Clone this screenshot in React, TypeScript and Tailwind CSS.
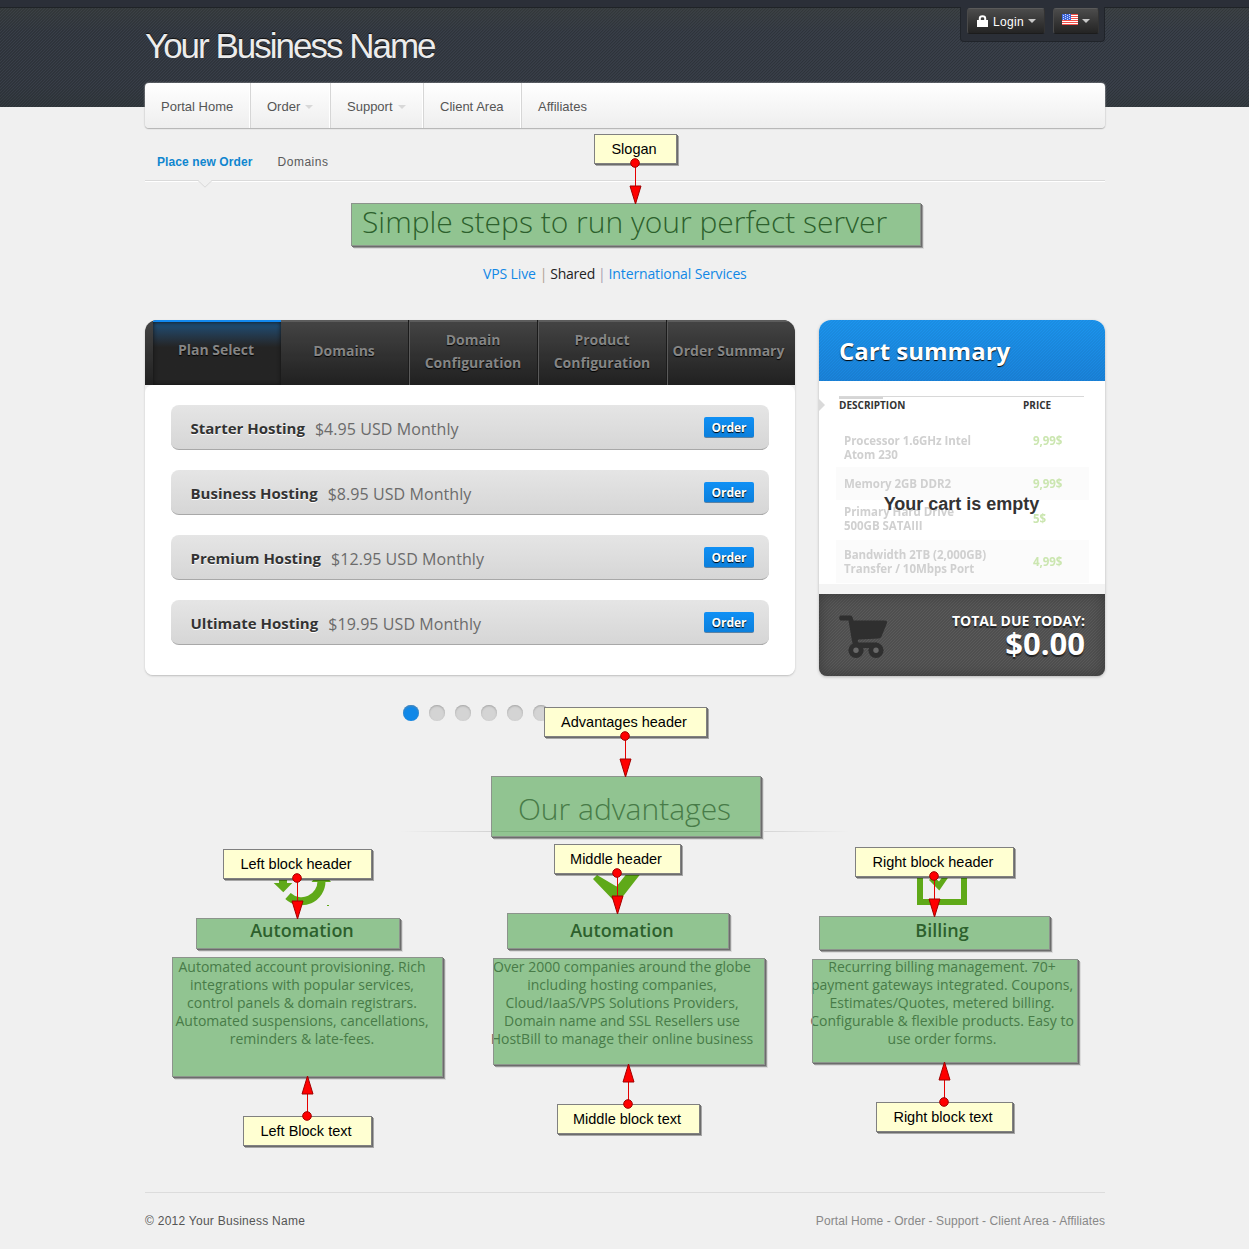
import React from "react";

const green = "#5fa918";

type Callout = {
  label: string;
  x: number;
  y: number;
  w: number;
  dotX: number;
  dotY: number;
  tipY: number;
};

const callouts: Callout[] = [
  { label: "Slogan", x: 594, y: 134, w: 83, dotX: 635, dotY: 163, tipY: 204 },
  { label: "Advantages header", x: 544, y: 707, w: 163, dotX: 625, dotY: 736, tipY: 777 },
  { label: "Left block header", x: 223, y: 849, w: 149, dotX: 297, dotY: 878, tipY: 919 },
  { label: "Middle header", x: 554, y: 844, w: 127, dotX: 617, dotY: 873, tipY: 914 },
  { label: "Right block header", x: 855, y: 847, w: 159, dotX: 934, dotY: 876, tipY: 917 },
  { label: "Left Block text", x: 243, y: 1116, w: 129, dotX: 307, dotY: 1116, tipY: 1076 },
  { label: "Middle block text", x: 557, y: 1104, w: 143, dotX: 628, dotY: 1104, tipY: 1064 },
  { label: "Right block text", x: 876, y: 1102, w: 137, dotX: 944, dotY: 1102, tipY: 1062 },
];

const highlights = [
  { x: 351, y: 203, w: 570, h: 43 },
  { x: 491, y: 776, w: 270, h: 61 },
  { x: 196, y: 918, w: 204, h: 31 },
  { x: 507, y: 913, w: 222, h: 36 },
  { x: 819, y: 916, w: 231, h: 34 },
  { x: 172, y: 957, w: 271, h: 120 },
  { x: 493, y: 958, w: 272, h: 107 },
  { x: 812, y: 959, w: 266, h: 104 },
];

function Annotations() {
  return (
    <div className="pointer-events-none absolute inset-0">
      {highlights.map((h, i) => (
        <div
          key={i}
          className="absolute border border-[#8c948c] bg-[#269326]/47 shadow-[1px_1px_0_#6c6c6c,2px_2px_0_#9a9a9a,3px_3px_0_#dcdcdc]"
          style={{ left: h.x, top: h.y, width: h.w, height: h.h }}
        />
      ))}
      {callouts.map((c) => (
        <div
          key={c.label}
          className="absolute flex h-[30px] items-center justify-center border border-[#808080] bg-[#ffffd2] pr-[3px] text-[14.5px] leading-none whitespace-nowrap text-black shadow-[1px_1px_0_#6c6c6c,2px_2px_0_rgba(0,0,0,0.3)]"
          style={{ left: c.x, top: c.y, width: c.w }}
        >
          {c.label}
        </div>
      ))}
      <svg className="absolute inset-0" width="1249" height="1249">
        {callouts.map((c) => {
          const base = c.tipY > c.dotY ? c.tipY - 18 : c.tipY + 18;
          const x = c.dotX + 0.5;
          return (
            <g key={c.label} fill="#ff0000" stroke="#a00000">
              <line x1={x} x2={x} y1={c.dotY} y2={base} stroke="#e60000" />
              <path d={`M${x - 5.5} ${base}H${x + 5.5}L${x} ${c.tipY}Z`} />
              <circle cx={c.dotX} cy={c.dotY} r="4.3" />
            </g>
          );
        })}
      </svg>
    </div>
  );
}

function Caret({ className }: { className: string }) {
  return (
    <svg className={className} width="8" height="4" viewBox="0 0 8 4">
      <path d="M0 0H8L4 4Z" fill="currentColor" />
    </svg>
  );
}

function Flag() {
  return (
    <svg width="16" height="11" viewBox="0 0 16 11" shapeRendering="crispEdges">
      <rect width="16" height="11" fill="#fff" />
      {[0, 2, 4, 6, 8, 10].map((y) => (
        <rect key={y} y={y} width="16" height="1" fill="#f2504a" />
      ))}
      <rect width="9" height="6" fill="#3f67d8" />
      {[1, 3, 5].map((y) =>
        [1, 3, 5, 7].map((x) => <rect key={`${x}${y}`} x={x} y={y - (x % 4 === 3 ? 1 : 0)} width="1" height="1" fill="#c9d6ff" />),
      )}
    </svg>
  );
}

function Header() {
  return (
    <header className="h-[107px] bg-[#343a42] bg-[linear-gradient(180deg,rgba(64,68,60,0.45),rgba(52,58,70,0.25)_30%,rgba(52,58,70,0.25)_80%,rgba(46,54,56,0.45)),repeating-linear-gradient(135deg,#2c3137_0px,#2c3137_0.7px,#3a4049_1.2px,#3a4049_2.12px)]">
      <div className="h-2 border-b border-[#1f2327] bg-[#2b2f38]" />
      <div className="ml-[145px] flex w-[960px] justify-between">
        <h1 className="mt-[17px] text-[35px] leading-[42px] tracking-[-2px] text-[#ececec] [text-shadow:0_-1px_1px_#111]">
          Your Business Name
        </h1>
        <div className="-mt-px flex h-[35px] w-[145px] gap-2 rounded-b-[4px] border border-t-0 border-[#20242a] bg-[#2b2f37] pt-px pl-[6px]">
          <button className="flex h-[26px] w-[78px] items-center rounded-[3px] border border-t-[#5a5a5a] border-r-[#333] border-b-[#1c1c1c] border-l-[#4a4a4a] bg-linear-to-b from-[#4c4c4c] to-[#242424] pl-[9px] text-[12px] text-white">
            <svg width="11" height="12" viewBox="0 0 11 12">
              <path d="M0 5H11V12H0Z" fill="#fff" />
              <path d="M2.8 5.5V3.3C2.8 .6 8.2 .6 8.2 3.3V5.5" fill="none" stroke="#fff" strokeWidth="2" />
            </svg>
            <span className="ml-[5px] pt-px tracking-[0.3px]">Login</span>
            <Caret className="ml-1 text-[#c8c8c8]" />
          </button>
          <button className="flex h-[26px] w-[46px] items-center rounded-[3px] border border-t-[#5a5a5a] border-r-[#333] border-b-[#1c1c1c] border-l-[#4a4a4a] bg-linear-to-b from-[#4c4c4c] to-[#242424] pl-2 text-white">
            <span className="-mt-[3px]">
              <Flag />
            </span>
            <Caret className="ml-1 text-[#c8c8c8]" />
          </button>
        </div>
      </div>
    </header>
  );
}

function Nav() {
  const item = "flex items-center border-r border-[#d6d6d6] pl-4 pt-[2px] shadow-[inset_-1px_0_0_#fff]";
  return (
    <nav className="relative -mt-6 ml-[145px] flex h-[45px] w-[960px] rounded-[4px] bg-linear-to-b from-white to-[#eeeeee] text-[13px] text-[#555] shadow-[0_1px_1px_#b4b4b4,0_0_2px_#bbb]">
      <a className={`${item} w-[106px]`}>Portal Home</a>
      <a className={`${item} w-[80px]`}>
        Order
        <Caret className="ml-[5px] text-[#d8d8d8]" />
      </a>
      <a className={`${item} w-[93px]`}>
        Support
        <Caret className="ml-[5px] text-[#d8d8d8]" />
      </a>
      <a className={`${item} w-[98px]`}>Client Area</a>
      <a className="flex items-center pt-[2px] pl-4">Affiliates</a>
    </nav>
  );
}

function SubNav() {
  return (
    <div className="ml-[145px] h-[75px] w-[960px]">
      <div className="flex h-[53px] gap-[25px] border-b border-[#dadada] pt-[26px] pl-3 text-[12px] leading-[16px] shadow-[0_1px_0_#fff]">
        <a className="font-bold tracking-[0.1px] text-[#0f86cf]">Place new Order</a>
        <a className="tracking-[0.5px] text-[#5a5a5a]">Domains</a>
      </div>
      <svg className="relative -top-px ml-[53px]" width="14" height="8" viewBox="0 0 14 8">
        <path d="M0 0L7 7L14 0Z" fill="#f0f0f0" />
        <path d="M0 .5L7 7.2L14 .5" fill="none" stroke="#d8d8d8" />
      </svg>
    </div>
  );
}

const plans = [
  ["Starter Hosting", "$4.95 USD Monthly"],
  ["Business Hosting", "$8.95 USD Monthly"],
  ["Premium Hosting", "$12.95 USD Monthly"],
  ["Ultimate Hosting", "$19.95 USD Monthly"],
];

function PlanPanel() {
  const tab =
    "flex items-center justify-center border-l border-[#5a5a5a] pr-[2px] pb-1 text-center shadow-[inset_0_2px_0_#5c5c5c,-1px_0_0_#1b1b1b]";
  return (
    <section className="h-[355px] w-[650px] rounded-b-[8px] rounded-t-[12px] bg-[#f0f0f0] shadow-[0_1px_2px_#bdbdbd]">
      <div className="flex h-[65px] overflow-hidden rounded-t-[12px] bg-[radial-gradient(rgba(0,0,0,0.1)_0.8px,transparent_0.9px),linear-gradient(180deg,#4c4c4c,#242424)] bg-[size:2px_2px,100%_100%] pl-2 text-[14px] leading-[23px] font-bold text-[#858585] [text-shadow:0_1px_1px_#000]">
        <div className="flex w-[128px] items-center justify-center border-t-2 border-[#1289f0] bg-linear-to-b from-[#1d4a70] from-5% via-[#242424] via-40% to-[#242424] pr-[2px] pb-[8px] shadow-[inset_0_0_4px_#111]">
          Plan Select
        </div>
        <div className="flex w-[128px] items-center justify-center pr-[2px] pb-1 shadow-[inset_0_2px_0_#5c5c5c]">Domains</div>
        <div className={`${tab} w-[129px]`}>
          Domain
          <br />
          Configuration
        </div>
        <div className={`${tab} w-[129px]`}>
          Product
          <br />
          Configuration
        </div>
        <div className="flex w-[128px] items-center justify-center border-l border-[#5a5a5a] pr-[6px] pb-1 whitespace-nowrap shadow-[inset_0_2px_0_#5c5c5c,-1px_0_0_#1b1b1b]">
          Order Summary
        </div>
      </div>
      <div className="flex h-[290px] flex-col gap-5 rounded-[8px] bg-white px-[26px] pt-5">
        {plans.map(([name, price]) => (
          <div
            key={name}
            className="flex h-[45px] items-center rounded-[8px] border-b border-[#a8a8a8] bg-linear-to-b from-[#e5e5e5] to-[#d6d6d6] pt-[3px] pr-[15px] pl-[19.5px]"
          >
            <span className="text-[15px] font-bold text-[#333] [text-shadow:0_1px_0_#fff]">{name}</span>
            <span className="ml-[10px] text-[16px] tracking-[0.07px] text-[#6b6b6b]">{price}</span>
            <span className="mt-[-3px] ml-auto flex h-[21px] w-[50px] items-center justify-center rounded-[2px] border-b border-[#5c82a3] bg-linear-to-b from-[#1090f5] to-[#0c80dc] pt-[2px] text-[12px] leading-none font-bold text-white [text-shadow:0_1px_1px_#000]">
              Order
            </span>
          </div>
        ))}
      </div>
    </section>
  );
}

type CartRowProps = {
  lines: string[];
  price: string;
  rowClass: string;
  priceClass?: string;
};

function CartRow({ lines, price, rowClass, priceClass = "" }: CartRowProps) {
  return (
    <div className={`flex items-center pl-[8px] ${rowClass}`}>
      <div className="w-[189px] text-[11.5px] leading-[14px] font-bold tracking-[-0.04px] text-[#d0d0d0] blur-[0.7px]">
        {lines.map((l) => (
          <div key={l}>{l}</div>
        ))}
      </div>
      <div className={`text-[11.5px] leading-[14px] font-bold tracking-[-0.04px] text-[#cbe6b0] blur-[0.7px] ${priceClass}`}>
        {price}
      </div>
    </div>
  );
}

function CartPanel() {
  return (
    <aside className="relative flex h-[356px] w-[286px] flex-col overflow-hidden rounded-t-[12px] rounded-b-[8px] bg-white shadow-[0_1px_3px_#b5b5b5]">
      <div className="h-[61px] bg-[repeating-linear-gradient(135deg,rgba(0,0,0,0.05)_0px,rgba(0,0,0,0.05)_1px,transparent_1px,transparent_2.12px),linear-gradient(180deg,#1c95ef,#1a84dc)] pt-[14px] pl-5 text-[24px] leading-[33px] font-bold text-white [text-shadow:0_1px_1px_#000]">
        Cart summary
      </div>
      <div className="relative h-[203px] pt-[15px]">
        <svg className="absolute top-[17px] left-0" width="7" height="14" viewBox="0 0 7 14">
          <path d="M0 1L6 7L0 13Z" fill="#dadada" />
        </svg>
        <div className="mx-5 w-[245px] border-t border-[#d8d8d8]">
          <div className="h-[2px] w-[44px] bg-[#d5d5d5]" />
        </div>
        <div className="-mt-[2px] flex pl-5 text-[10px] leading-[16px] font-bold text-[#333]">
          <span className="w-[184px]">DESCRIPTION</span>
          <span>PRICE</span>
        </div>
        <div className="mt-[14px] ml-[17px] w-[253px]">
          <CartRow
            lines={["Processor 1.6GHz Intel", "Atom 230"]}
            price="9,99$"
            rowClass="h-[40px] pt-[2px]"
            priceClass="-mt-[14px]"
          />
          <CartRow lines={["Memory 2GB DDR2"]} price="9,99$" rowClass="h-[33px] bg-[#fbfbfb]" />
          <CartRow lines={["Primary Hard Drive", "500GB SATAIII"]} price="5$" rowClass="h-[40px] pb-[2px]" />
          <CartRow
            lines={["Bandwidth 2TB (2,000GB)", "Transfer / 10Mbps Port"]}
            price="4,99$"
            rowClass="h-[43px] bg-[#fbfbfb]"
          />
        </div>
        <div className="absolute top-[111px] left-0 w-[285px] text-center font-['Liberation_Sans'] text-[18px] leading-[24px] font-bold text-[#333]">
          Your cart is empty
        </div>
      </div>
      <div className="h-[10px] bg-[#f4f4f4]" />
      <div className="flex h-[82px] justify-between bg-[repeating-linear-gradient(135deg,#4f4f4f_0px,#4f4f4f_1px,#5a5a5a_1.2px,#5a5a5a_2.12px)] pt-[17px] pr-5 pl-5 shadow-[inset_0_0_14px_#3a3a3a]">
        <svg className="mt-1 -ml-px" width="49" height="44" viewBox="0 0 49 44" fill="#2f2f2f">
          <path d="M2.5 .5H12.5Q14 .5 14.6 2.5L15.5 5.5H46Q49.8 5.5 49 8L43.5 21.5Q42.5 23.5 40.5 23.5L20.5 24.5Q19 26 20.5 27.5H39Q41 28.5 41 30H16Q14.5 29 14 26L10.5 5.5H2.5Q-.3 3 2.5 .5Z" />
          <circle cx="18" cy="35.3" r="7.6" />
          <circle cx="38" cy="35.3" r="7.6" />
          <rect x="18" y="29" width="20" height="4" />
          <circle cx="18" cy="35.3" r="2.7" fill="#686868" />
          <circle cx="38" cy="35.3" r="2.7" fill="#686868" />
        </svg>
        <div className="text-right font-bold text-white [text-shadow:0_2px_1px_#222]">
          <div className="text-[14px] leading-[19px]">TOTAL DUE TODAY:</div>
          <div className="text-[31px] leading-[27px]">$0.00</div>
        </div>
      </div>
    </aside>
  );
}

const features = [
  {
    title: "Automation",
    lines: [
      "Automated account provisioning. Rich",
      "integrations with popular services,",
      "control panels & domain registrars.",
      "Automated suspensions, cancellations,",
      "reminders & late-fees.",
    ],
    icon: (
      <>
        <path d="M7 20H15V37H20.3L11.3 46.3L1.7 37H7Z" />
        <path d="M16 50A20 20 0 0 0 49.5 35" fill="none" stroke={green} strokeWidth="8" />
        <path d="M39.5 36L49.5 24L59 36Z" />
        <rect x="55" y="59" width="2" height="1" />
      </>
    ),
  },
  {
    title: "Automation",
    lines: [
      "Over 2000 companies around the globe",
      "including hosting companies,",
      "Cloud/IaaS/VPS Solutions Providers,",
      "Domain name and SSL Resellers use",
      "HostBill to manage their online business",
    ],
    icon: <path d="M1 33L5 29L24.5 40.5L36 26H50L25 58Z" />,
  },
  {
    title: "Billing",
    lines: [
      "Recurring billing management. 70+",
      "payment gateways integrated. Coupons,",
      "Estimates/Quotes, metered billing.",
      "Configurable & flexible products. Easy to",
      "use order forms.",
    ],
    icon: (
      <>
        <rect x="8" y="13" width="44" height="43" fill="none" stroke={green} strokeWidth="6" />
        <path d="M17 34L21 30L27 35.5L34 26H40L27.3 44.5Z" />
      </>
    ),
  },
];

function Advantages() {
  return (
    <section>
      <div className="mx-auto flex h-[111px] w-[450px] flex-col items-center justify-end">
        <h2 className="text-[30px] leading-[44px] font-light text-[#666]">Our advantages</h2>
        <div className="h-px w-full bg-linear-to-r from-transparent via-[#a8a8a8] to-transparent" />
      </div>
      <div className="ml-[142px] flex">
        {features.map((f, i) => (
          <div key={i} className="flex w-[320px] flex-col items-center pt-[14px]">
            <svg width="60" height="60" viewBox="0 0 60 60" fill={green}>
              {f.icon}
            </svg>
            <h3 className="mt-3 text-[18px] leading-6 font-semibold text-[#333]">{f.title}</h3>
            <div className="mt-4 text-center text-[14px] leading-[18px] whitespace-nowrap text-[#666]">
              {f.lines.map((l) => (
                <div key={l}>{l}</div>
              ))}
            </div>
          </div>
        ))}
      </div>
    </section>
  );
}

export default function App() {
  return (
    <div className="relative h-[1249px] w-[1249px] overflow-hidden bg-[#f0f0f0] font-['Liberation_Sans',Arial,sans-serif]">
      <Header />
      <Nav />
      <SubNav />
      <main className="font-['Open_Sans','Noto_Sans',sans-serif]">
        <h2 className="ml-[362px] h-[60px] text-[30px] leading-[38px] font-light whitespace-nowrap text-[#333]">
          Simple steps to run your perfect server
        </h2>
        <div className="ml-[483px] h-[57px] text-[14px] leading-[22px] tracking-[-0.13px] whitespace-nowrap text-[#1188e6]">
          VPS Live<span className="mr-[3px] ml-1 text-[#b0a090]">|</span>
          <span className="tracking-[-0.25px] text-[#222]">Shared</span>
          <span className="mx-[3px] text-[#a8a0b0]">|</span>International Services
        </div>
        <div className="ml-[145px] flex w-[960px] justify-between">
          <PlanPanel />
          <CartPanel />
        </div>
        <div className="mt-[29px] ml-[403px] flex h-4 gap-[10px]">
          <span className="size-4 rounded-full bg-[#1088e8] shadow-[inset_0_1px_2px_#5a87ad]" />
          {[1, 2, 3, 4, 5].map((d) => (
            <span key={d} className="size-4 rounded-full bg-[#d4d4d4] shadow-[inset_0_1px_2px_#a3a3a3]" />
          ))}
        </div>
        <Advantages />
      </main>
      <footer className="mt-[144px] ml-[145px] flex w-[960px] justify-between border-t border-[#dcdcdc] pt-[20px] text-[12px] leading-4">
        <span className="tracking-[0.26px] text-[#555]">© 2012 Your Business Name</span>
        <span className="tracking-[0.07px] text-[#888]">Portal Home - Order - Support - Client Area - Affiliates</span>
      </footer>
      <Annotations />
    </div>
  );
}
